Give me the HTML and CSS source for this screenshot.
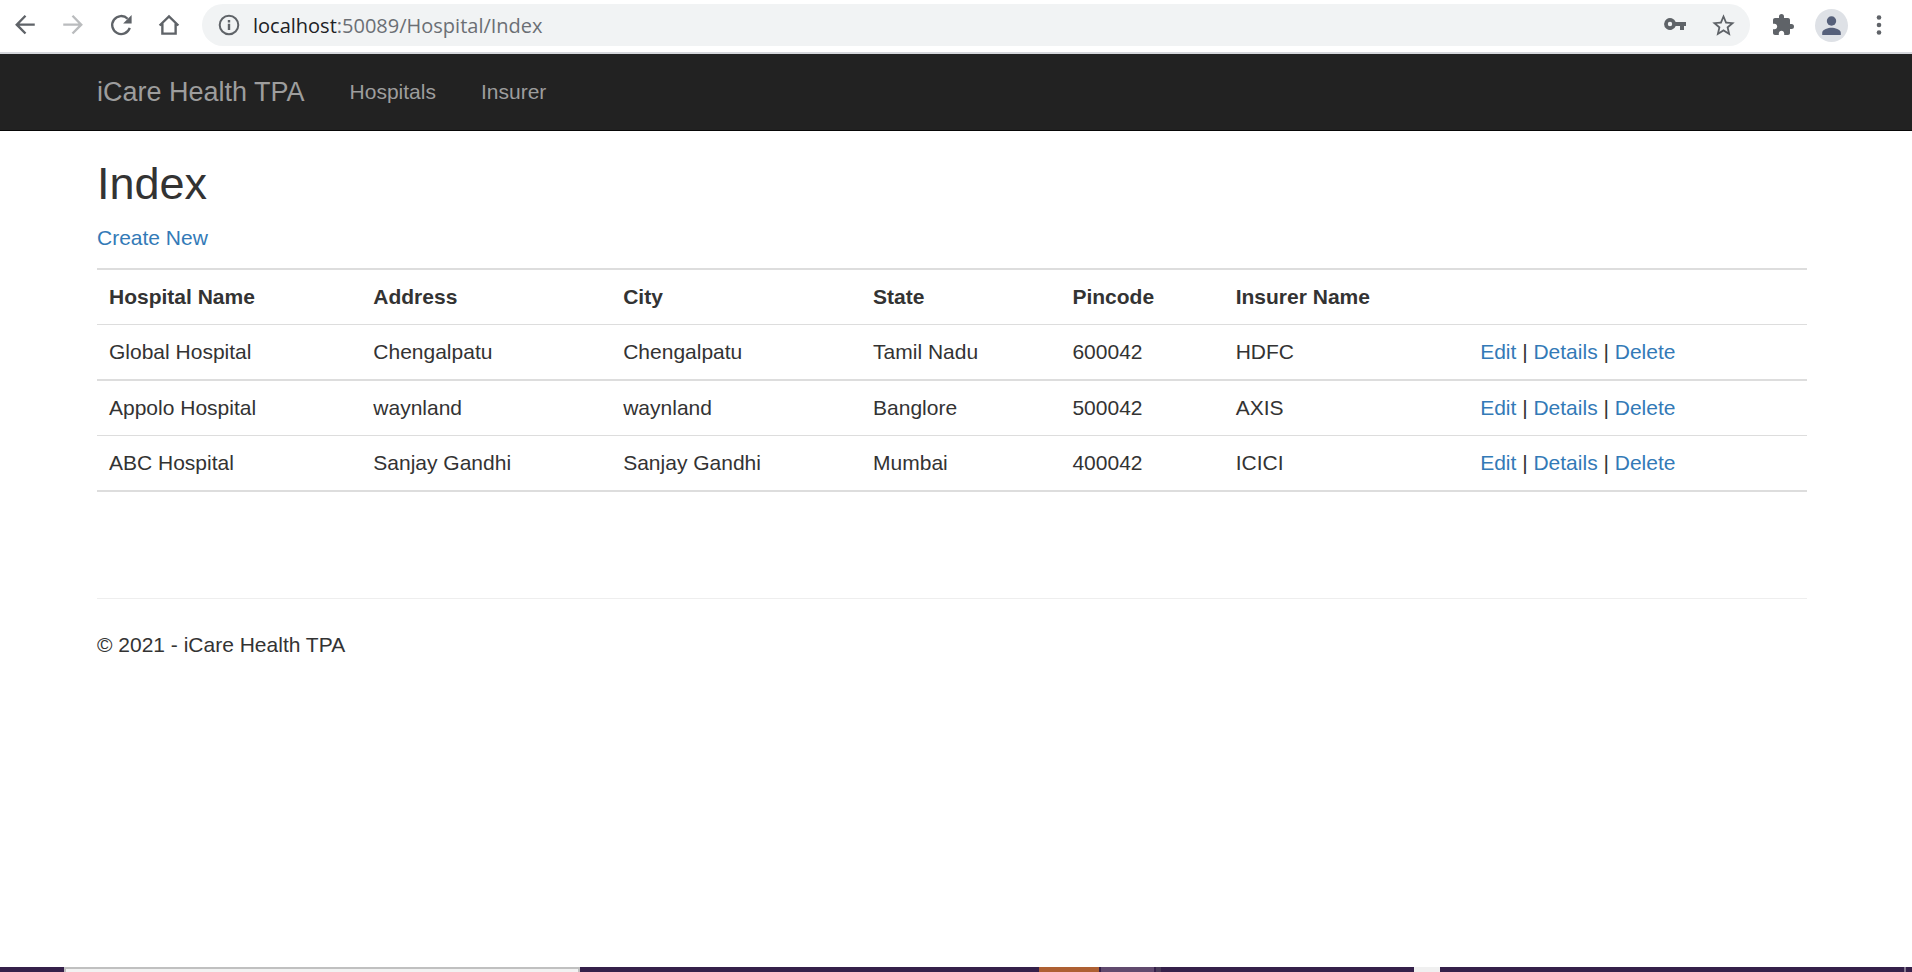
FILE: index.html
```html
<!DOCTYPE html>
<html lang="en">
<head>
<meta charset="utf-8">
<title>Index - iCare Health TPA</title>
<link rel="stylesheet" href="styles.css">
</head>
<body>
<div class="toolbar">
  <button class="tool" type="button" aria-label="Back"><svg class="icon-nav" viewBox="0 0 24 24"><path d="M19.800 11.700H5.500M12.400 4.600 5.400 11.700l7 7.100" fill="none" stroke="currentColor" stroke-width="1.900"/></svg></button>
  <button class="tool tool-off" type="button" aria-label="Forward" disabled><svg class="icon-nav" viewBox="0 0 24 24"><path d="M4.200 11.700h14.300M11.600 4.600l7 7.100-7 7.100" fill="none" stroke="currentColor" stroke-width="1.900"/></svg></button>
  <button class="tool" type="button" aria-label="Reload"><svg class="icon-nav" viewBox="0 0 24 24"><path d="M19 14.300a7.200 7.200 0 1 1-1.700-7.300" fill="none" stroke="currentColor" stroke-width="1.900"/><path d="M20.500 3.900v6.800h-6.800z" fill="currentColor"/></svg></button>
  <button class="tool" type="button" aria-label="Home"><svg class="icon-nav" viewBox="0 0 24 24"><path d="M4.500 12.400 12 5.200l7.500 7.200M6.700 10.800v8.100h10.600v-8.100" fill="none" stroke="currentColor" stroke-width="1.900"/></svg></button>
  <div class="omnibox">
    <button class="tool" type="button" aria-label="Site information"><svg class="icon-small" viewBox="0 0 24 24"><circle cx="12" cy="12" r="9.300" fill="none" stroke="currentColor" stroke-width="2"/><path d="M10.800 10.800h2.400V17h-2.400zM10.800 7h2.400v2.400h-2.400z" fill="currentColor"/></svg></button>
    <span class="url"><span class="host">localhost</span>:50089/Hospital/Index</span>
    <button class="tool" type="button" aria-label="Saved passwords"><svg class="icon-small" viewBox="0 0 24 24"><path d="M12.700 9a6 6 0 1 0 0 4H17v4h4v-4h2V9zM7 13.200a2.200 2.200 0 1 1 0-4.400 2.200 2.200 0 0 1 0 4.400z" fill="currentColor"/></svg></button>
    <button class="tool" type="button" aria-label="Bookmark this page"><svg class="icon-star" viewBox="0 0 24 24"><path d="m22 9.240-7.190-.62L12 2 9.190 8.630 2 9.240l5.460 4.730L5.820 21 12 17.270 18.180 21l-1.630-7.030zM12 15.400l-3.760 2.270 1-4.280-3.320-2.880 4.380-.38L12 6.100l1.710 4.040 4.380.38-3.320 2.880 1 4.280z" fill="currentColor"/></svg></button>
  </div>
  <button class="tool" type="button" aria-label="Extensions"><svg class="icon-small" viewBox="0 0 24 24"><path d="M20.500 11H19V7c0-1.100-.9-2-2-2h-4V3.500a2.500 2.500 0 0 0-5 0V5H4c-1.100 0-1.990.9-1.990 2v3.800H3.500c1.490 0 2.700 1.210 2.700 2.700s-1.210 2.700-2.700 2.700H2V20c0 1.100.9 2 2 2h3.800v-1.500c0-1.490 1.210-2.700 2.700-2.700s2.700 1.210 2.700 2.700V22H17c1.100 0 2-.9 2-2v-4h1.500a2.500 2.500 0 0 0 0-5z" fill="currentColor"/></svg></button>
  <button class="tool" type="button" aria-label="Profile"><svg class="icon-avatar" viewBox="0 0 33 33"><circle cx="16.500" cy="16.500" r="16.500" fill="#dee1e6"/><circle cx="16.500" cy="12" r="4.700" fill="#56607a"/><path d="M7.200 26v-2.300c0-3.300 6.200-4.900 9.300-4.900s9.300 1.600 9.300 4.900V26z" fill="#56607a"/></svg></button>
  <button class="tool" type="button" aria-label="Menu"><svg class="icon-small" viewBox="0 0 24 24"><g fill="currentColor"><circle cx="12" cy="4.500" r="2.300"/><circle cx="12" cy="12" r="2.300"/><circle cx="12" cy="19.500" r="2.300"/></g></svg></button>
</div>

<header class="navbar">
  <nav class="container nav-row">
    <a class="brand" href="#">iCare Health TPA</a>
    <a class="nav-link" href="#">Hospitals</a>
    <a class="nav-link" href="#">Insurer</a>
  </nav>
</header>

<main class="page">
  <div class="container">
    <h2 class="title">Index</h2>
    <p class="create"><a href="#">Create New</a></p>
    <table class="table">
      <thead>
        <tr><th>Hospital Name</th><th>Address</th><th>City</th><th>State</th><th>Pincode</th><th>Insurer Name</th><th></th></tr>
      </thead>
      <tbody>
        <tr><td>Global Hospital</td><td>Chengalpatu</td><td>Chengalpatu</td><td>Tamil Nadu</td><td>600042</td><td>HDFC</td><td><a href="#">Edit</a> | <a href="#">Details</a> | <a href="#">Delete</a></td></tr>
      </tbody>
      <tbody>
        <tr class="group-start"><td>Appolo Hospital</td><td>waynland</td><td>waynland</td><td>Banglore</td><td>500042</td><td>AXIS</td><td><a href="#">Edit</a> | <a href="#">Details</a> | <a href="#">Delete</a></td></tr>
        <tr class="group-end"><td>ABC Hospital</td><td>Sanjay Gandhi</td><td>Sanjay Gandhi</td><td>Mumbai</td><td>400042</td><td>ICICI</td><td><a href="#">Edit</a> | <a href="#">Details</a> | <a href="#">Delete</a></td></tr>
      </tbody>
    </table>
    <footer class="footer"><p>© 2021 - iCare Health TPA</p></footer>
  </div>
</main>

<div class="taskbar">
  <span class="task-start"></span>
  <span class="task-search"></span>
  <span class="task-space"></span>
  <span class="task-alert"></span>
  <span class="task-active"></span>
  <span class="task-stack"></span>
  <span class="task-gap"></span>
  <span class="task-light"></span>
  <span class="task-tray"></span>
  <span class="task-desktop"></span>
</div>
</body>
</html>
```

FILE: styles.css
```css
* { box-sizing: border-box; }

body {
  margin: 0;
  min-height: 100vh;
  display: flex;
  flex-direction: column;
  background: #fff;
  color: #333;
  font: 21px/30px "Liberation Sans", Arial, sans-serif;
}

a { color: #337ab7; text-decoration: none; }
p, h2 { margin: 0; }

/* Browser toolbar */
.toolbar {
  display: flex;
  align-items: center;
  padding: 4px 9px 6px 1px;
  border-bottom: 2px solid #d5d7dc;
}

.tool {
  display: flex;
  flex: none;
  align-items: center;
  justify-content: center;
  width: 48px;
  height: 42px;
  padding: 0;
  border: 0;
  background: none;
  color: #5f6368;
}

.tool-off { color: #babcbe; }
.icon-nav { width: 30px; height: 30px; }
.icon-small { width: 24px; height: 24px; }
.icon-star { width: 27px; height: 27px; }
.icon-avatar { width: 33px; height: 33px; }

.omnibox {
  display: flex;
  flex: 1;
  align-items: center;
  margin: 0 9px;
  padding: 0 3px;
  border-radius: 21px;
  background: #f1f3f4;
}

.url {
  flex: 1;
  padding-top: 2px;
  color: #6b6f74;
  font-family: "Open Sans", "Segoe UI", sans-serif;
  font-size: 20px;
}

.host { color: #202124; }

/* Site */
.container {
  width: calc(100% - 40px);
  max-width: 1710px;
  margin: 0 auto;
}

.navbar {
  padding-right: 8px;
  border-bottom: 1px solid #080808;
  background: #222;
}

.nav-row {
  display: flex;
  align-items: center;
  gap: 45px;
  height: 76px;
}

.brand { color: #9d9d9d; font-size: 27px; }
.nav-link { color: #9d9d9d; }

.page {
  flex: 1;
  padding: 28px 8px 0 0;
}

.title {
  margin-bottom: 14px;
  font-size: 45px;
  font-weight: 400;
  line-height: 50px;
}

.create { margin-bottom: 15px; }

.table {
  width: 100%;
  border-spacing: 0;
  text-align: left;
}

.table th,
.table td {
  padding: 12px;
  border-top: 1px solid #ddd;
}

.table th,
.table .group-start td { border-top-width: 2px; }
.table .group-end td { border-bottom: 2px solid #ddd; }

.footer {
  margin-top: 106px;
  padding-top: 31px;
  border-top: 1px solid #eee;
}

/* Desktop taskbar edge */
.taskbar {
  display: flex;
  height: 5px;
  background: #35204a;
}

.task-start { width: 64px; }
.task-search { width: 516px; border: 2px solid #c0c0c0; border-bottom: 0; background: #f2f2f2; }
.task-space { flex: 459; }
.task-alert { width: 60px; margin-right: 2px; background: #ae6033; }
.task-active { width: 53px; margin-right: 2px; background: #614a6e; }
.task-stack { width: 5px; background: #493a58; }
.task-gap { flex: 253; }
.task-light { width: 26px; background: #f0f0f0; }
.task-tray { width: 464px; }
.task-desktop { width: 2px; margin-right: 6px; background: #85788f; }
```
